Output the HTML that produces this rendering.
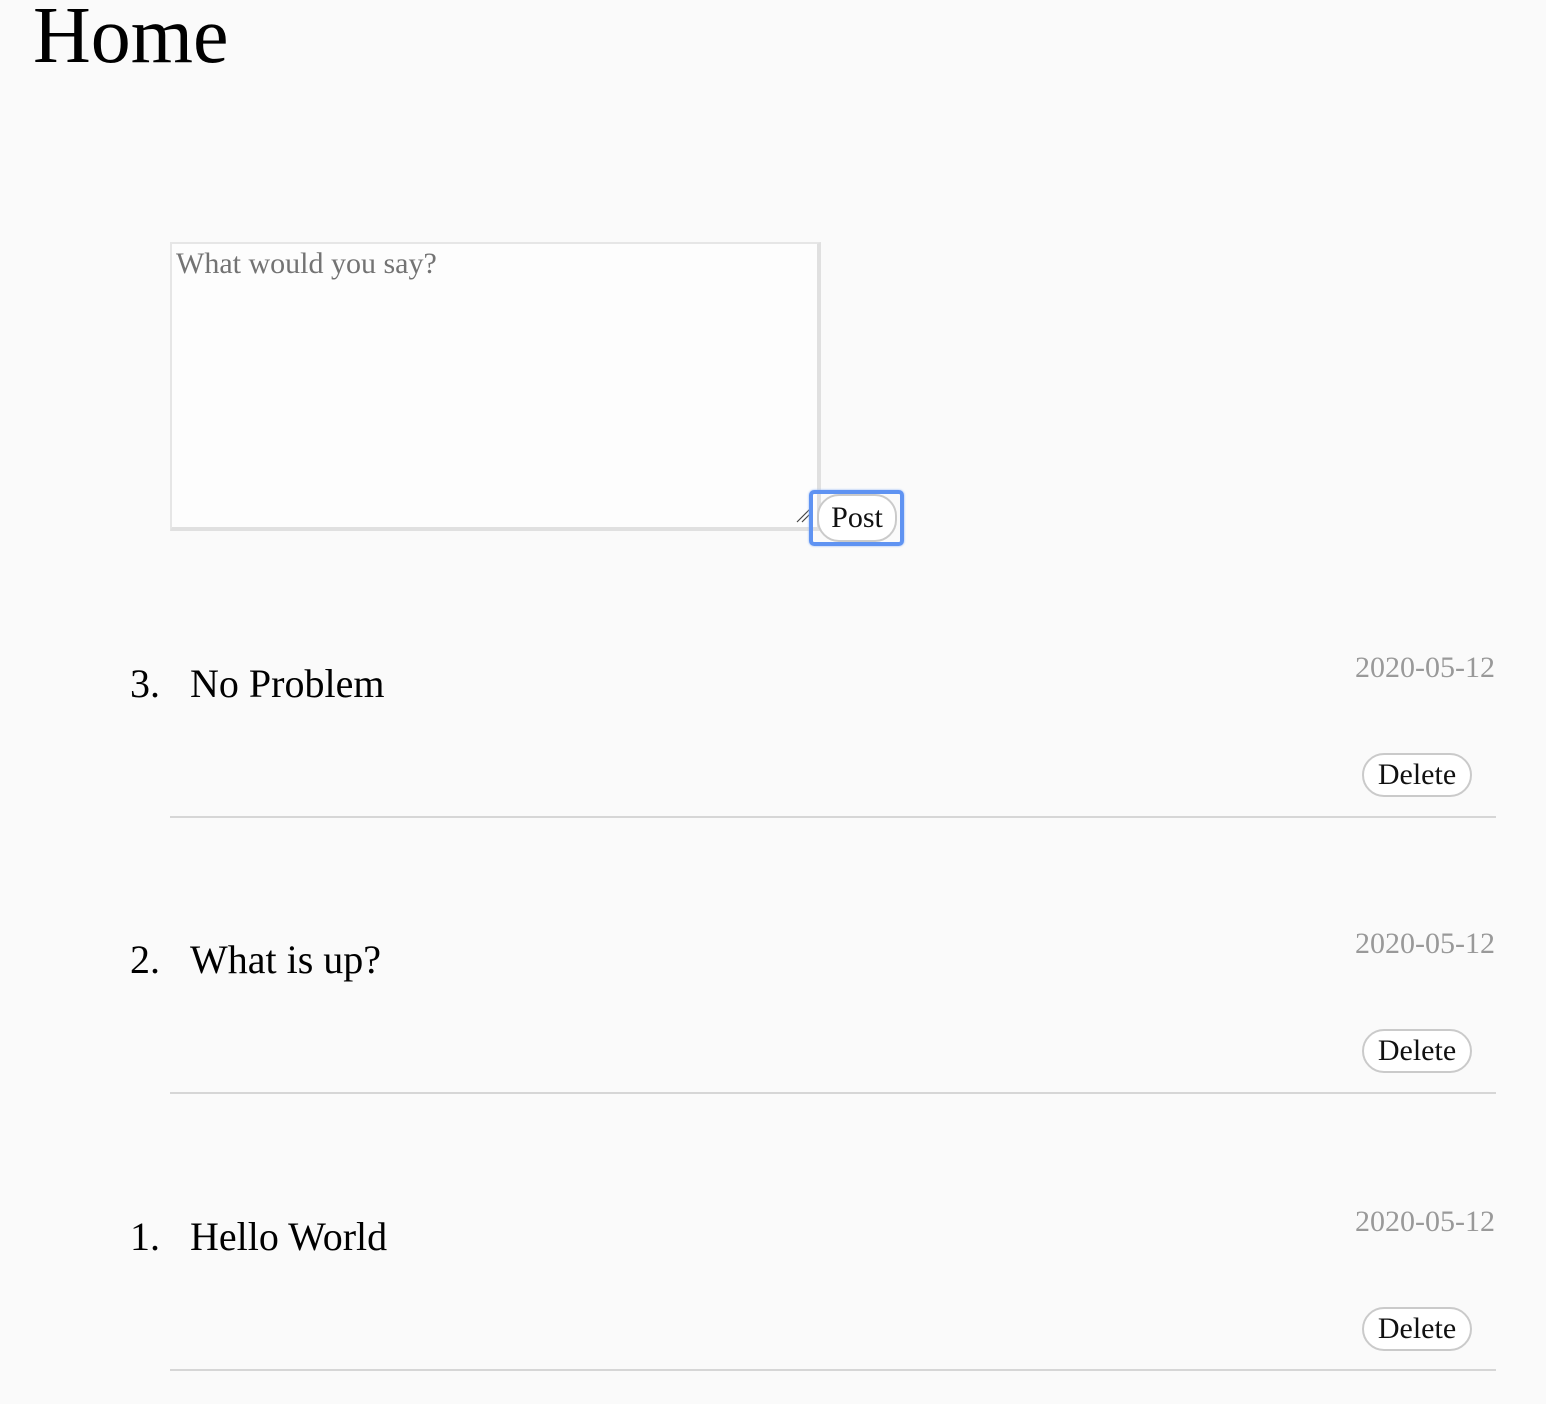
<!DOCTYPE html>
<html><head><style>
body{margin:0;background:#fafafa;font-family:"Liberation Serif",serif;width:1546px;height:1404px;overflow:hidden;position:relative}
.a{position:absolute;white-space:nowrap}
h1{position:absolute;left:33px;top:-14px;margin:0;font-size:80px;font-weight:normal;line-height:100px}
.ta{position:absolute;left:170px;top:242px;width:645px;height:283px;background:#fdfdfd;border-top:2px solid #e6e6e6;border-left:2px solid #e6e6e6;border-right:4px solid #e0e0e0;border-bottom:4px solid #e0e0e0}
.ph{left:176px;top:246px;font-size:30px;color:#737373;line-height:36px}
.ring{position:absolute;left:809px;top:490px;width:87px;height:48px;border:4px solid #5f93f2;border-radius:5px;box-shadow:0 0 2px #8fb4f6}
.btn{position:absolute;background:#fff;border:2px solid #cacaca;border-radius:22px;font-size:30px;color:#111;text-align:center;box-sizing:border-box}
.num{font-size:40px;line-height:48px}
.date{font-size:30px;color:#999;right:51px;line-height:36px}
.hr{position:absolute;left:170px;width:1326px;height:2px;background:#d6d6d6}
</style></head><body>
<h1>Home</h1>
<div class="ta"></div>
<div class="a ph">What would you say?</div>
<svg class="a" style="left:796px;top:507px" width="16" height="16"><path d="M1 15L14 2M6 15L14 7" stroke="#444" stroke-width="1.2"/></svg>
<div class="ring"></div>
<div class="btn" style="left:817px;top:494px;width:80px;height:48px;line-height:44px">Post</div>

<div class="a num" style="left:130px;top:660px">3.</div>
<div class="a num" style="left:190px;top:660px">No Problem</div>
<div class="a date" style="top:650px">2020-05-12</div>
<div class="btn" style="left:1362px;top:753px;width:110px;height:44px;line-height:40px">Delete</div>
<div class="hr" style="top:816px"></div>

<div class="a num" style="left:130px;top:936px">2.</div>
<div class="a num" style="left:190px;top:936px">What is up?</div>
<div class="a date" style="top:926px">2020-05-12</div>
<div class="btn" style="left:1362px;top:1029px;width:110px;height:44px;line-height:40px">Delete</div>
<div class="hr" style="top:1092px"></div>

<div class="a num" style="left:130px;top:1213px">1.</div>
<div class="a num" style="left:190px;top:1213px">Hello World</div>
<div class="a date" style="top:1204px">2020-05-12</div>
<div class="btn" style="left:1362px;top:1307px;width:110px;height:44px;line-height:40px">Delete</div>
<div class="hr" style="top:1369px"></div>
</body></html>
